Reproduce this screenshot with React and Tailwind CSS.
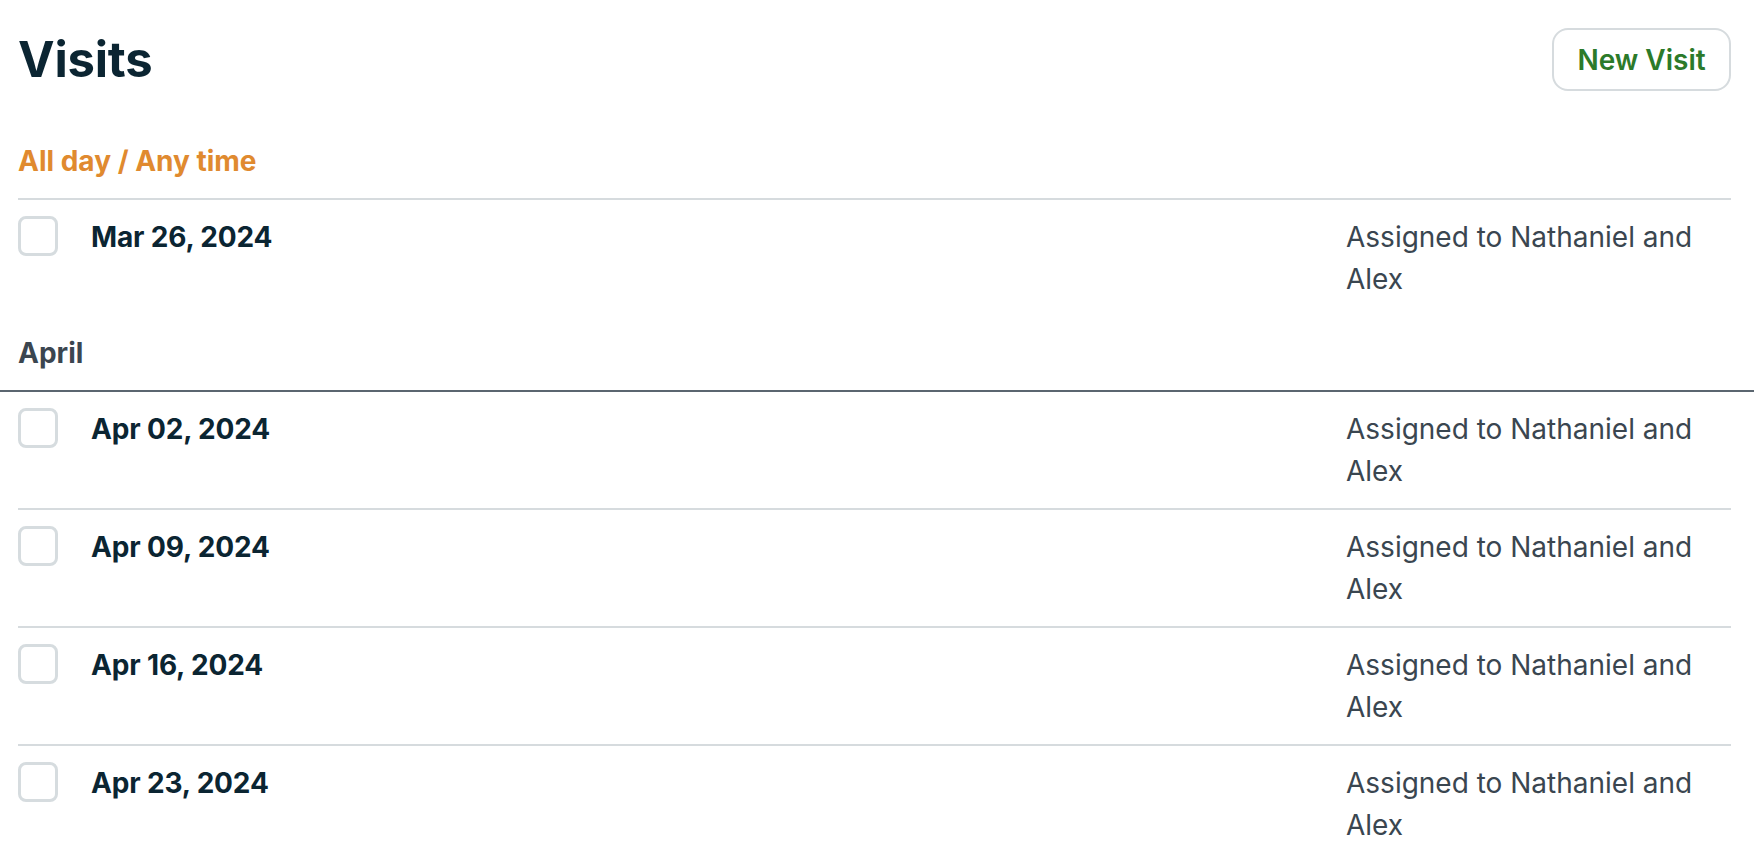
import React from "react";

const font = { fontFamily: "Inter, 'Noto Sans', sans-serif" };

function Row({ date, last }) {
  return (
    <div
      className={`flex items-start py-4 ${last ? "" : "border-b-2 border-[#d6dbde]"}`}
    >
      <div className="w-10 h-10 shrink-0 rounded-[8px] border-[3px] border-[#d6dcdf] bg-white" />
      <div className="ml-[33px] flex-1 text-[28px] leading-[42px] font-bold tracking-[-0.15px] text-[#0b2532]">
        {date}
      </div>
      <div className="w-[385px] shrink-0 text-[28px] leading-[42px] text-[#3a4650]">
        Assigned to Nathaniel and Alex
      </div>
    </div>
  );
}

export default function App() {
  return (
    <div className="min-h-[850px] bg-white pl-[18px] pr-[23px] pt-[28px]" style={font}>
      <div className="flex items-center justify-between">
        <h1 className="text-[49px] leading-[58px] font-bold text-[#0b2532] tracking-[-0.2px]">
          Visits
        </h1>
        <button className="w-[179px] h-[63px] rounded-[16px] border-2 border-[#d6dbde] bg-white text-[28px] font-semibold text-[#2c7a2a]">
          New Visit
        </button>
      </div>

      <div className="mt-[34px] pt-[18px] pb-[18px] border-b-2 border-[#d6dbde] text-[28px] leading-[37px] font-bold text-[#e08a2f]">
        All day / Any time
      </div>
      <Row date="Mar 26, 2024" last />

      <div className="-ml-[18px] pl-[18px] -mr-[23px] pt-[19px] pb-[18px] border-b-2 border-[#5b6670] text-[28px] leading-[37px] font-bold text-[#3b4650]">
        April
      </div>
      <Row date="Apr 02, 2024" />
      <Row date="Apr 09, 2024" />
      <Row date="Apr 16, 2024" />
      <Row date="Apr 23, 2024" last />
    </div>
  );
}
